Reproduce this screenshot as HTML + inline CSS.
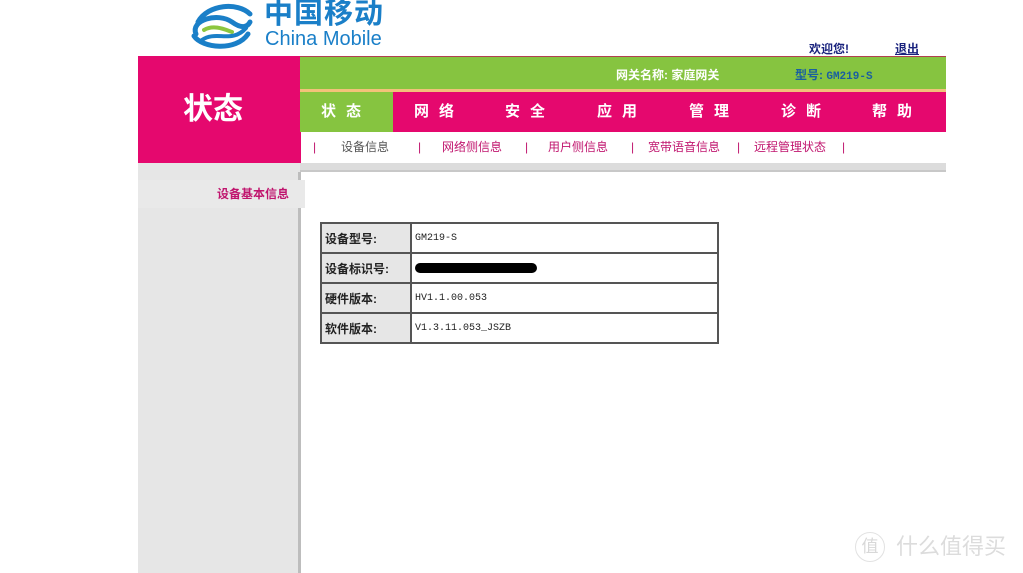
<!DOCTYPE html>
<html><head><meta charset="utf-8"><style>
*{margin:0;padding:0;box-sizing:border-box}
body{width:1023px;height:573px;background:#fff;position:relative;overflow:hidden;font-family:"Liberation Sans","Noto Sans CJK SC","WenQuanYi Zen Hei",sans-serif;font-size:12px}
.abs{position:absolute}
.nav span{position:absolute;top:0;line-height:40px;color:#fff;font-size:15px;font-weight:bold;letter-spacing:10px}
.sub span{position:absolute;top:0;line-height:30px;color:#c0156e;font-size:12px}
table{border-collapse:collapse;position:absolute;left:320px;top:222px;width:399px}
td{border:2px solid #555;height:30px;font-size:12px;padding-left:3px}
td.l{background:#e6e6e6;width:90px;font-weight:bold;color:#222}
td.v{font-family:"Liberation Mono",monospace;font-size:10px;color:#222}
</style></head><body>
<!-- logo -->
<svg class="abs" style="left:188px;top:0" width="70" height="52" viewBox="0 0 70 52">
<g fill="none" stroke-linecap="round">
<path d="M10 22 C20 4 50 2 62 14" stroke="#1a7fc8" stroke-width="5"/>
<path d="M8 34 C2 20 30 12 44 22 C55 30 60 26 62 22" stroke="#1a7fc8" stroke-width="5"/>
<path d="M16 30 C26 24 38 30 44 32" stroke="#8cc63f" stroke-width="4"/>
<path d="M6 36 C14 48 48 52 60 34" stroke="#1a7fc8" stroke-width="5"/>
<path d="M14 40 C28 30 44 44 58 28" stroke="#1a7fc8" stroke-width="4"/>
</g></svg>
<div class="abs" style="left:264px;top:-2px;font-size:29px;color:#1a7fc8;letter-spacing:1px;line-height:32px;font-weight:bold">中国移动</div>
<div class="abs" style="left:265px;top:27px;font-size:20px;color:#1a7fc8;line-height:24px">China Mobile</div>
<div class="abs" style="left:809px;top:40px;font-size:12px;font-weight:bold;color:#1a237e">欢迎您!</div>
<div class="abs" style="left:895px;top:40px;font-size:12px;font-weight:bold;color:#1a237e;text-decoration:underline">退出</div>
<!-- pink block -->
<div class="abs" style="left:138px;top:56px;width:163px;height:107px;background:#e5086e"></div>
<div class="abs" style="left:183px;top:90px;font-size:30px;color:#fff;font-weight:bold;line-height:40px">状态</div>
<!-- green bar -->
<div class="abs" style="left:300px;top:56px;width:646px;height:34px;background:#86c440;border-top:1px solid #b04050"></div>
<div class="abs" style="left:300px;top:89px;width:646px;height:3px;background:#f2c27a"></div>
<div class="abs" style="left:616px;top:66px;color:#fff;font-weight:bold;font-size:12px">网关名称: 家庭网关</div>
<div class="abs" style="left:795px;top:66px;color:#1a5fa0;font-weight:bold;font-size:12px">型号: <span style="font-family:'Liberation Mono',monospace;font-size:11px">GM219-S</span></div>
<!-- nav -->
<div class="abs nav" style="left:300px;top:92px;width:646px;height:40px;background:#e5086e">
<div class="abs" style="left:0;top:0;width:93px;height:40px;background:#86c440"></div>
<span style="left:21px">状态</span><span style="left:114px">网络</span><span style="left:205px">安全</span><span style="left:297px">应用</span><span style="left:389px">管理</span><span style="left:481px">诊断</span><span style="left:572px">帮助</span>
</div>
<div class="abs sub" style="left:300px;top:132px;width:646px;height:30px">
<span style="left:13px">|</span><span style="left:41px;color:#555">设备信息</span><span style="left:118px">|</span><span style="left:142px">网络侧信息</span><span style="left:225px">|</span><span style="left:248px">用户侧信息</span><span style="left:331px">|</span><span style="left:348px">宽带语音信息</span><span style="left:437px">|</span><span style="left:454px">远程管理状态</span><span style="left:542px">|</span>
</div>
<!-- sidebar -->
<div class="abs" style="left:138px;top:163px;width:162px;height:410px;background:#e6e6e6"></div>
<div class="abs" style="left:300px;top:163px;width:646px;height:9px;background:#dcdcdc;border-bottom:2px solid #c8c8c8"></div>
<div class="abs" style="left:298px;top:172px;width:3px;height:401px;background:#bdbdbd"></div>
<div class="abs" style="left:138px;top:180px;width:167px;height:28px;background:#e9e9e9"></div>
<div class="abs" style="left:217px;top:185px;color:#c0156e;font-weight:bold;font-size:12px">设备基本信息</div>
<!-- table -->
<table>
<tr><td class="l">设备型号:</td><td class="v">GM219-S</td></tr>
<tr><td class="l">设备标识号:</td><td class="v"><div style="width:122px;height:10px;background:#000;border-radius:5px"></div></td></tr>
<tr><td class="l">硬件版本:</td><td class="v">HV1.1.00.053</td></tr>
<tr><td class="l">软件版本:</td><td class="v">V1.3.11.053_JSZB</td></tr>
</table>
<!-- watermark -->
<div class="abs" style="left:855px;top:532px;width:30px;height:30px;border:1px solid #e2e2e2;border-radius:50%;color:#d8d8d8;font-size:17px;text-align:center;line-height:28px">值</div>
<div class="abs" style="left:896px;top:533px;color:#dcdcdc;font-size:22px;line-height:28px">什么值得买</div>
</body></html>
